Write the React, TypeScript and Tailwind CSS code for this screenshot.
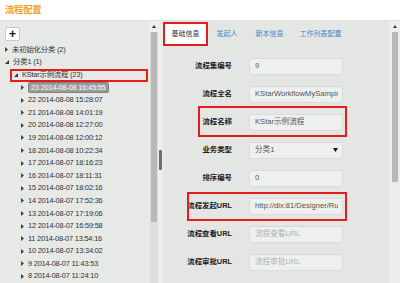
import React from "react";

const FONT = "font-['Liberation_Sans','Noto_Sans_CJK_SC',sans-serif]";

type Node = { level: number; expanded?: boolean; text: string; boxed?: boolean; selected?: boolean };

const children: string[] = [
  "23 2014-08-08 16:45:55",
  "22 2014-08-08 15:28:07",
  "21 2014-08-08 14:01:19",
  "20 2014-08-08 12:27:00",
  "19 2014-08-08 12:00:12",
  "18 2014-08-08 10:22:34",
  "17 2014-08-07 18:16:23",
  "16 2014-08-07 18:11:31",
  "15 2014-08-07 18:02:16",
  "14 2014-08-07 17:52:36",
  "13 2014-08-07 17:19:06",
  "12 2014-08-07 16:59:58",
  "11 2014-08-07 13:54:16",
  "10 2014-08-07 13:34:02",
  "9 2014-08-07 11:43:53",
  "8 2014-08-07 11:24:10",
];

const nodes: Node[] = [
  { level: 0, text: "未初始化分类 (2)" },
  { level: 0, expanded: true, text: "分类1 (1)" },
  { level: 1, expanded: true, text: "KStar示例流程 (23)", boxed: true },
  ...children.map((t, i) => ({ level: 2, text: t, selected: i === 0 })),
];

function Arrow({ expanded }: { expanded?: boolean }) {
  return expanded ? (
    <svg width="4" height="4" viewBox="0 0 4 4" className="shrink-0">
      <polygon points="4,0 4,4 0,4" fill="#333" />
    </svg>
  ) : (
    <svg width="3" height="5" viewBox="0 0 3 5" className="shrink-0">
      <polygon points="0,0 3,2.5 0,5" fill="#444" />
    </svg>
  );
}

function TreeRow({ n }: { n: Node }) {
  const indent = n.level === 0 ? "pl-[5px]" : n.level === 1 ? "pl-[14px]" : "pl-[21px]";
  return (
    <div className={`relative h-[12.6px] flex items-center ${indent}`}>
      <Arrow expanded={n.expanded} />
      <span
        className={`ml-[4px] text-[7.4px] leading-[10px] whitespace-nowrap tracking-[-0.2px] ${
          n.selected
            ? "bg-[#9b9c9b] text-white px-[2px] rounded-[2px] border border-[#808080] h-[11px] flex items-center"
            : "text-[#333]"
        }`}
      >
        {n.text}
      </span>
      {n.boxed && (
        <div className="absolute left-[10px] top-0 w-[138px] h-[13px] border-2 border-[#e31c1c]" />
      )}
    </div>
  );
}

function Field({
  label,
  value,
  placeholder,
  select,
  box,
}: {
  label: string;
  value?: string;
  placeholder?: string;
  select?: boolean;
  box?: "name" | "url";
}) {
  return (
    <div className="relative h-[28px] flex items-center">
      <div className="w-[69px] text-right text-[7.4px] font-bold text-[#1a1a1a] whitespace-nowrap">{label}</div>
      <div className="ml-[17px] w-[94px] h-[17px] bg-[#eef0ee] border border-[#dadcda] rounded-[2px] flex items-center pl-[5px] pr-[4px] overflow-hidden">
        <span
          className={`text-[7.6px] whitespace-nowrap flex-1 overflow-hidden ${
            value ? "text-[#555]" : "text-[#b2b4b2]"
          }`}
        >
          {value ?? placeholder}
        </span>
        {select && (
          <svg width="5" height="4" viewBox="0 0 5 4" className="shrink-0">
            <polygon points="0,0 5,0 2.5,4" fill="#111" />
          </svg>
        )}
      </div>
      {box === "name" && (
        <div className="absolute left-[35px] top-[-2px] w-[149px] h-[31px] border-2 border-[#e31c1c]" />
      )}
      {box === "url" && (
        <div className="absolute left-[24px] top-[-0.5px] w-[160px] h-[29px] border-2 border-[#e31c1c]" />
      )}
    </div>
  );
}

export default function App() {
  return (
    <div className={`w-[400px] h-[283px] overflow-hidden bg-[#e5e8e5] ${FONT}`}>
      {/* header */}
      <div className="h-[21px] bg-white border-b border-[#e0e2e0] flex items-center pl-[5px]">
        <span className="text-[9.4px] font-bold text-[#f0a22e] tracking-[-0.3px]">流程配置</span>
      </div>

      <div className="flex h-[262px]">
        {/* left tree panel */}
        <div className="w-[150px] bg-[#e6e9e6] flex flex-col">
          <div className="pl-[5px] pt-[6px]">
            <div className="w-[15px] h-[14px] bg-white border border-[#c8cac8] rounded-[2px] flex items-center justify-center text-[12px] font-bold leading-none text-[#111]">
              +
            </div>
          </div>
          <div className="mt-[2.5px]">
            {nodes.map((n, i) => (
              <TreeRow key={i} n={n} />
            ))}
          </div>
        </div>

        {/* left scrollbar */}
        <div className="w-[8px] flex flex-col bg-[#dcdedc]">
          <div className="h-[11px] bg-[#eeefee] flex items-center justify-center">
            <svg width="4" height="3" viewBox="0 0 4 3">
              <polygon points="2,0 4,3 0,3" fill="#333" />
            </svg>
          </div>
          <div className="h-[190px] bg-[#b7b9b7] mx-[1px]" />
        </div>

        {/* splitter */}
        <div className="w-[5px] bg-[#eceeec] pt-[129px] flex justify-center">
          <div className="w-[3px] h-[20px] bg-[#6e6f6e] rounded-[1px]" />
        </div>

        {/* right panel */}
        <div className="flex-1 bg-[#e3e6e3] flex flex-col">
          <div className="h-[25px] flex items-end">
            <div className="w-[45px] h-[24px] border-2 border-[#e31c1c] bg-white flex items-center justify-center text-[7px] text-[#333]">
              基础信息
            </div>
            <div className="w-[38px] h-[24px] flex items-center justify-center text-[7px] text-[#4a86c6]">发起人</div>
            <div className="w-[47px] h-[24px] flex items-center justify-center text-[7px] text-[#4a86c6]">新本信息</div>
            <div className="w-[55px] h-[24px] flex items-center justify-center text-[7px] text-[#4a86c6]">工作列表配置</div>
          </div>
          <div className="pt-[6px]">
            <Field label="流程集编号" value="9" />
            <Field label="流程全名" value="KStarWorkflowMySample" />
            <Field label="流程名称" value="KStar示例流程" box="name" />
            <Field label="业务类型" value="分类1" select />
            <Field label="排序编号" value="0" />
            <Field label="流程发起URL" value="http://dlx:81/Designer/Ru" box="url" />
            <Field label="流程查看URL" placeholder="流程查看URL" />
            <Field label="流程审批URL" placeholder="流程审批URL" />
          </div>
        </div>

        {/* right scrollbar */}
        <div className="w-[10px] flex flex-col bg-[#eceeec]">
          <div className="h-[11px] flex items-center justify-center">
            <svg width="4" height="3" viewBox="0 0 4 3">
              <polygon points="2,0 4,3 0,3" fill="#333" />
            </svg>
          </div>
          <div className="ml-[2px] w-[6px] h-[150px] bg-[#b7b9b7]" />
        </div>
      </div>
    </div>
  );
}
